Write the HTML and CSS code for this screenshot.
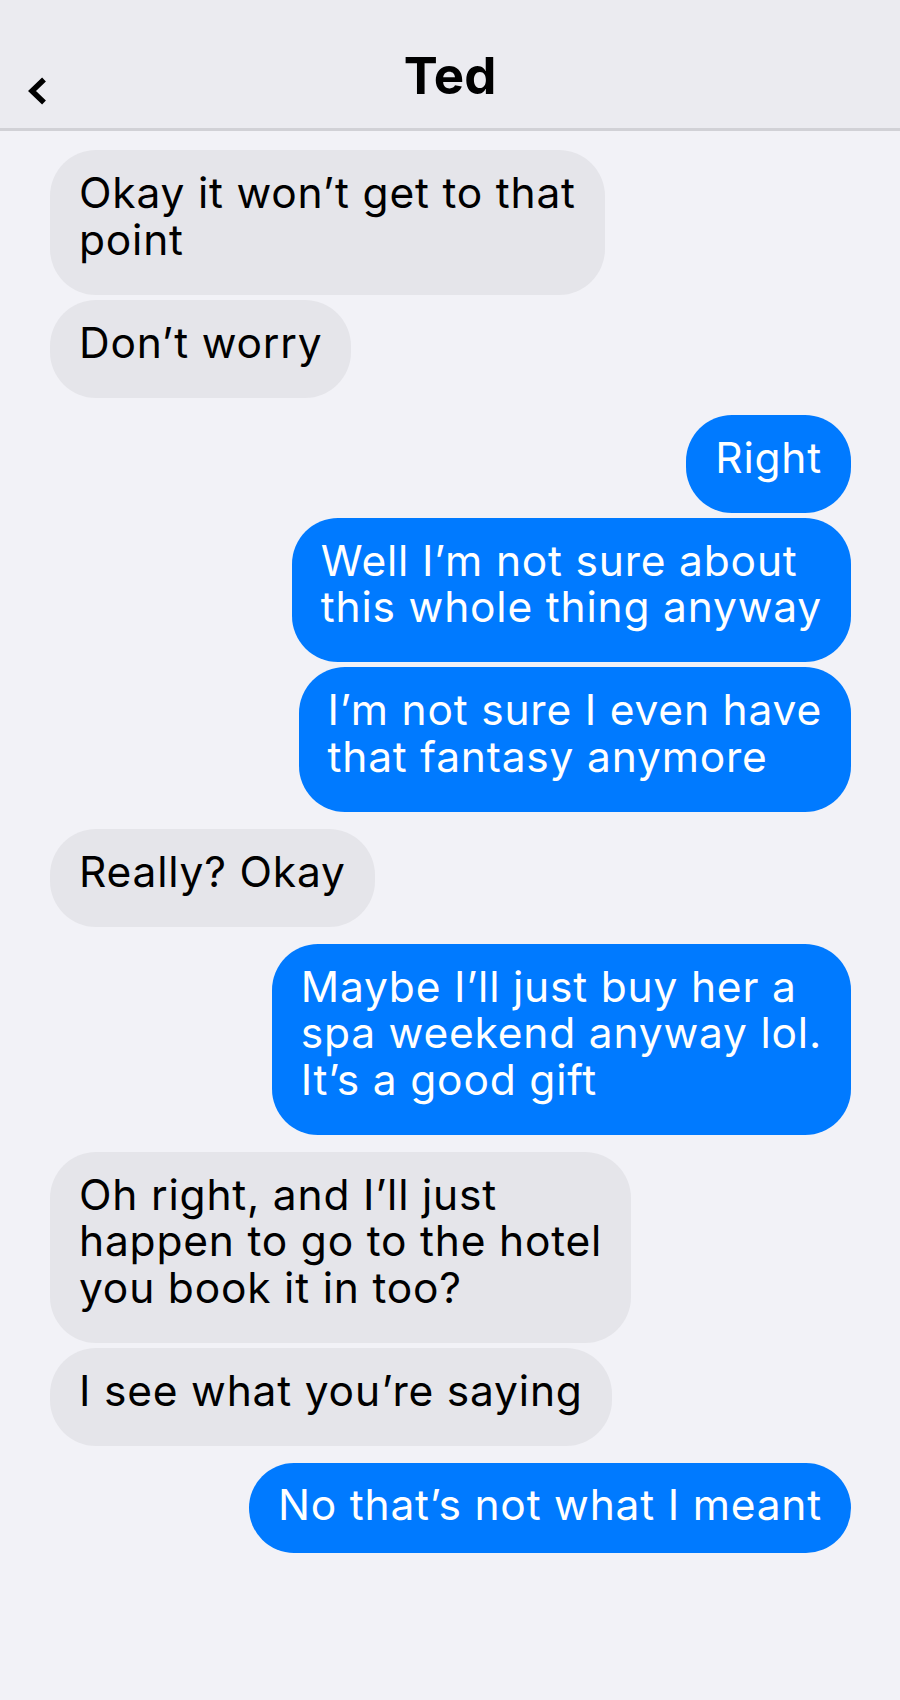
FILE: index.html
```html
<!DOCTYPE html>
<html>
<head>
	<meta charset="utf-8" />
	<title>Ted</title>
	<link rel="stylesheet" href="styles.css">
</head>
<body>
	<div class="nav">
		<div class="back">
			<svg width="20" height="28" viewBox="0 0 20 28"><polyline points="16,2.5 4,14 16,25.5" fill="none" stroke="#000" stroke-width="5.5" /></svg>
		</div>
		<div class="title">Ted</div>
		<div></div>
	</div>
	<div class="thread">
		<div class="msg them">Okay it won’t get to that<br>point</div>
		<div class="msg them">Don’t worry</div>

		<div class="msg me gap">Right</div>
		<div class="msg me">Well I’m not sure about<br>this whole thing anyway</div>
		<div class="msg me">I’m not sure I even have<br>that fantasy anymore</div>

		<div class="msg them gap">Really? Okay</div>

		<div class="msg me gap">Maybe I’ll just buy her a<br>spa weekend anyway lol.<br>It’s a good gift</div>

		<div class="msg them gap">Oh right, and I’ll just<br>happen to go to the hotel<br>you book it in too?</div>
		<div class="msg them">I see what you’re saying</div>

		<div class="msg me gap last">No that’s not what I meant</div>
	</div>
</body>
</html>
```

FILE: styles.css
```css
body {
	margin: 0;
	background: #f2f2f7;
	font-family: 'Inter', 'Liberation Sans', sans-serif;
	color: #000;
}
.nav {
	display: grid;
	grid-template-columns: 1fr auto 1fr;
	align-items: start;
	height: 82px;
	padding: 46px 0 0 0;
	background: #ebebf0;
	border-bottom: 3px solid #d1d1d6;
}
.nav .back {
	margin: 31px 0 0 28px;
	height: 28px;
}
.nav .back svg {
	display: block;
}
.nav .title {
	font-size: 51px;
	line-height: 60px;
	font-weight: 700;
}
.thread {
	display: flex;
	flex-direction: column;
	padding: 19px 49px 0 50px;
}
.msg {
	white-space: nowrap;
	font-size: 42.5px;
	line-height: 46.5px;
	letter-spacing: 0.8px;
	padding: 20px 29px 31.5px 29px;
	border-radius: 46px;
	margin-top: 5px;
}
.msg:first-child {
	margin-top: 0;
}
.msg.gap {
	margin-top: 17px;
}
.them {
	align-self: flex-start;
	background: #e5e5ea;
}
.me {
	align-self: flex-end;
	background: #007aff;
	color: #fff;
}
.msg.last {
	padding-top: 19px;
	padding-bottom: 25px;
}
```
